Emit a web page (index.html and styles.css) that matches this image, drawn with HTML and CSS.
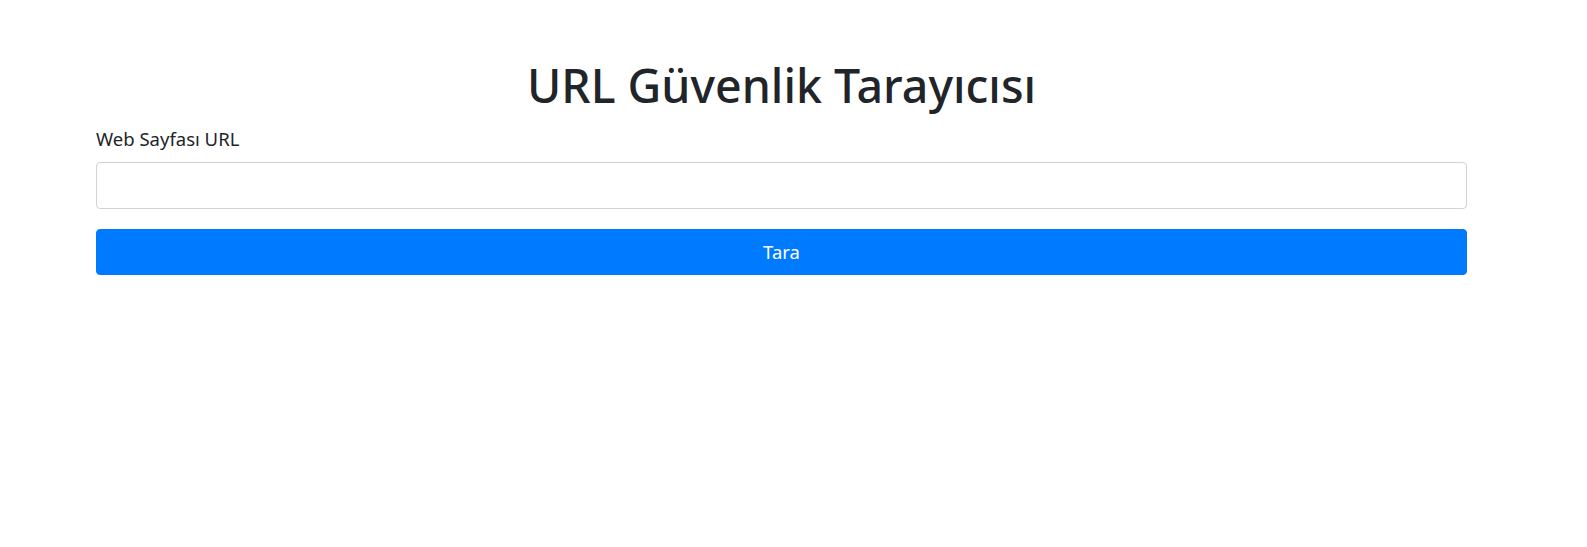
FILE: index.html
```html
<!DOCTYPE html>
<html lang="tr">
<head>
<meta charset="utf-8">
<title>URL Güvenlik Tarayıcısı</title>
<link rel="stylesheet" href="styles.css">
</head>
<body>
<main class="container">
  <h1 class="title">URL Güvenlik Tarayıcısı</h1>
  <form class="scan-form">
    <label class="field-label" for="url">Web Sayfası URL</label>
    <input class="field-input" id="url" type="text">
    <button class="scan-btn" type="button">Tara</button>
  </form>
</main>
</body>
</html>
```
FILE: styles.css
```css
* { box-sizing: border-box; }
html, body { margin: 0; padding: 0; background: #fff; }
body {
  font-family: "Noto Sans", "Open Sans", sans-serif;
  color: #212529;
  font-size: 18.5px;
  line-height: 30px;
}
.container {
  margin: 0 120px 0 96px;
  padding-top: 55px;
}
.title {
  margin: 0 0 9px;
  font-size: 46.5px;
  font-weight: 500;
  line-height: 60px;
  text-align: center;
}
.scan-form {
  display: flex;
  flex-direction: column;
}
.field-label {
  display: block;
  margin-bottom: 8px;
}
.field-input {
  display: block;
  width: 100%;
  height: 47px;
  border: 1px solid #ced4da;
  border-radius: 4px;
  padding: 6px 12px;
  font: inherit;
  color: #495057;
}
.scan-btn {
  display: block;
  width: 100%;
  height: 46px;
  margin-top: 20px;
  border: 1px solid #007bff;
  border-radius: 4px;
  background: #007bff;
  color: #fff;
  font: inherit;
  cursor: pointer;
}
```
